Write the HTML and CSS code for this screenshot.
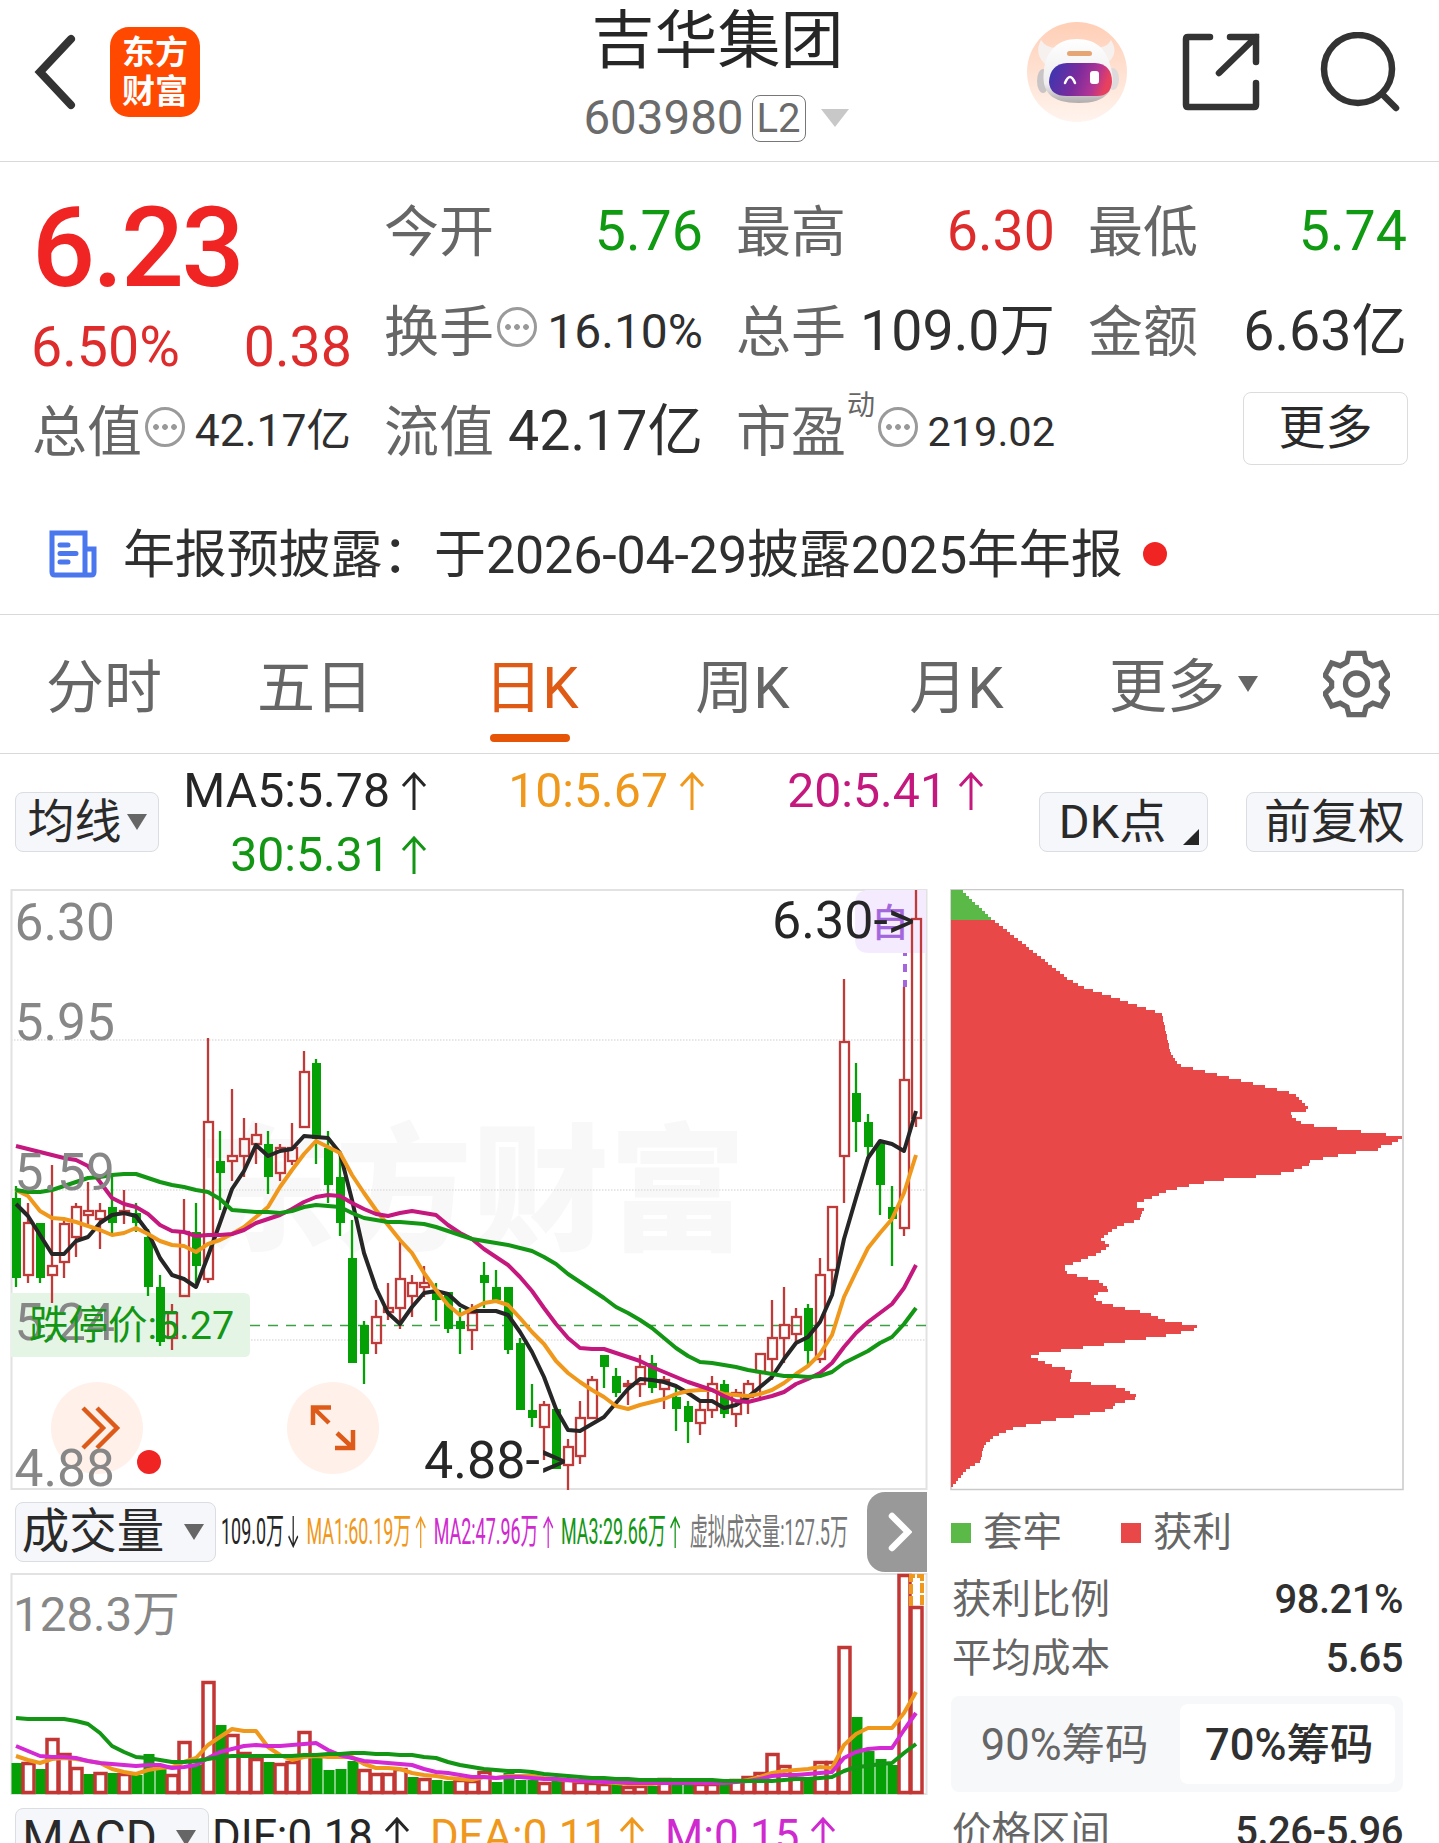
FILE: index.html
```html
<!DOCTYPE html>
<html lang="zh-CN">
<head>
    <meta charset="UTF-8">
    <meta name="viewport" content="width=device-width, initial-scale=1.0">
    <title>吉华集团 603980</title>
    <link rel="stylesheet" href="styles.css">
</head>
<body>
    <header class="top-bar">
        <div class="top-left">
            <svg class="back" width="44" height="78" viewBox="0 0 44 78"><path d="M39 6 L8 39 L39 72"/></svg>
            <div class="logo"><span>东方</span><span>财富</span></div>
        </div>
        <div class="stock-title">
            <h1>吉华集团</h1>
            <div class="stock-code">603980<span class="level">L2</span><svg width="30" height="20" viewBox="0 0 30 20"><path d="M1 1h28L15 19z" fill="#c8c8c8"/></svg></div>
        </div>
        <div class="top-right">
            <svg class="avatar" width="100" height="100" viewBox="0 0 100 100">
                <defs>
                    <linearGradient id="peach" x1="0" y1="0" x2="0" y2="1"><stop offset="0" stop-color="#ffceb5"/><stop offset="1" stop-color="#fff4ee"/></linearGradient>
                    <linearGradient id="visor" x1="0" y1="0" x2="1" y2="0.2"><stop offset="0" stop-color="#3437b4"/><stop offset="0.5" stop-color="#7a2b9c"/><stop offset="0.8" stop-color="#b03595"/><stop offset="1" stop-color="#e8405f"/></linearGradient>
                    <linearGradient id="shell" x1="0" y1="0" x2="0" y2="1"><stop offset="0" stop-color="#ffffff"/><stop offset="0.7" stop-color="#efedee"/><stop offset="1" stop-color="#b0abac"/></linearGradient>
                </defs>
                <circle cx="50" cy="50" r="50" fill="url(#peach)"/>
                <path d="M20 44 Q6 32 14 18 Q20 27 32 26 M79 42 Q93 32 84 18 Q80 26 68 26" fill="#f6f0ef"/>
                <ellipse cx="16" cy="59" rx="6" ry="12" fill="#c9c4c6"/>
                <ellipse cx="86" cy="57" rx="6" ry="11" fill="#ded9da"/>
                <path d="M50 17 C70 17 80 28 84 46 C90 68 80 81 52 81 C24 81 14 70 17 48 C19 30 30 17 50 17z" fill="url(#shell)"/>
                <rect x="40" y="29" width="25" height="5" rx="2.5" fill="#e5a673"/>
                <path d="M40 41H68Q85 42 85 60Q84 74 70 74H40Q23 74 22 60Q23 42 40 41z" fill="url(#visor)"/>
                <path d="M38 61 Q43 49 48 61" fill="none" stroke="#fff" stroke-width="2.500" stroke-linecap="round"/>
                <rect x="63" y="49" width="9" height="13" rx="3" fill="#fff"/>
            </svg>
            <svg class="share" width="78" height="78" viewBox="0 0 78 78"><path d="M28 4H6Q4 4 4 6V72Q4 74 6 74H72Q74 74 74 72V50M48 4H74V29M74 4L37 40"/></svg>
            <svg class="search" width="80" height="80" viewBox="0 0 80 80"><circle cx="38" cy="37" r="34"/><path d="M62 62 L76 76"/></svg>
        </div>
    </header>

    <section class="quote">
        <div class="price-box">
            <div class="price">6.23</div>
            <div class="change"><span>6.50%</span><span>0.38</span></div>
        </div>
        <div class="cell"><label>今开</label><b class="down">5.76</b></div>
        <div class="cell"><label>最高</label><b class="up">6.30</b></div>
        <div class="cell"><label>最低</label><b class="down">5.74</b></div>
        <div class="cell"><label>换手</label><i class="info"></i><b class="mid">16.10%</b></div>
        <div class="cell"><label>总手</label><b>109.0万</b></div>
        <div class="cell"><label>金额</label><b>6.63亿</b></div>
        <div class="cell"><label>总值</label><i class="info"></i><b class="small">42.17亿</b></div>
        <div class="cell"><label>流值</label><b>42.17亿</b></div>
        <div class="cell"><label>市盈</label><sup>动</sup><i class="info"></i><b class="smaller">219.02</b></div>
        <div class="cell cell-more"><button class="more">更多</button></div>
    </section>

    <section class="notice">
        <svg width="48" height="48" viewBox="0 0 48 48"><path d="M3 3H36V45H6Q3 45 3 42zM36 19H45V42Q45 45 42 45H36M11 15H19M11 23.500H27M11 32H19"/></svg>
        <span>年报预披露：于2026-04-29披露2025年年报</span>
        <em></em>
    </section>

    <nav class="tabs">
        <a>分时</a>
        <a>五日</a>
        <a class="active">日K</a>
        <a>周K</a>
        <a>月K</a>
        <a class="tab-more">更多<svg width="20" height="16" viewBox="0 0 20 16"><path d="M0 0h20L10 16z"/></svg></a>
        <svg class="gear" width="67" height="68" viewBox="0 0 70 70">
            <path d="M27 3H43L45 12L52 16L61 13L68 26L61 33V38L68 45L61 58L52 55L45 59L43 67H27L25 59L18 55L9 58L2 45L9 38V33L2 26L9 13L18 16L25 12z"/>
            <circle cx="35" cy="35" r="11.500"/>
        </svg>
    </nav>

    <main class="board">
        <div class="k-side">
            <div class="ma-row">
                <button class="pick">均线<svg width="20" height="16" viewBox="0 0 20 16"><path d="M0 0h20L10 16z"/></svg></button>
                <div class="ma-list">
                    <span class="c-black">MA5:5.78<svg class="arrow"><use href="#arr"/></svg></span>
                    <span class="c-orange">10:5.67<svg class="arrow"><use href="#arr"/></svg></span>
                    <span class="c-pink">20:5.41<svg class="arrow"><use href="#arr"/></svg></span>
                    <span class="c-green">30:5.31<svg class="arrow"><use href="#arr"/></svg></span>
                </div>
            </div>
            <svg class="k-chart" width="917" height="602" viewBox="11 889 917 602">
                <text class="watermark" x="198" y="1240">东方财富</text>
                <g class="grid">
                    <path d="M11 1040H926M11 1190H926M11 1340H926"/>
                    <rect x="11.500" y="890" width="915" height="599"/>
                </g>
                <circle cx="97" cy="1428" r="46" fill="#fff1e9"/>
                <circle cx="333" cy="1428" r="46" fill="#fff1e9"/>
                <path class="tool" d="M83 1408L103 1428L83 1448M97 1408L117 1428L97 1448"/>
                <path class="tool" d="M331 1407.500H313V1425M313 1407.500L329 1423M335 1448H353V1430M353 1448L337 1433"/>
                <path d="M11 1293H244Q250 1293 250 1299V1351Q250 1357 244 1357H11z" fill="#e4f4e5"/>
                <path d="M869 890H926V953H869Q855 953 855 939V904Q855 890 869 890z" fill="#f5ebff"/>
                <text class="self" x="871" y="936">自</text>
                <path d="M905 953V956M905 964V972M905 980V987" stroke="#a466dc" stroke-width="4"/>
                <path d="M250 1325.500H926" stroke="#3ea043" stroke-width="1.500" stroke-dasharray="10 8"/>
                <g id="candles"></g>
                <g id="price-ma"></g>
                <g class="axis">
                    <text x="14.500" y="940">6.30</text>
                    <text x="14.500" y="1040">5.95</text>
                    <text x="14.500" y="1190">5.59</text>
                    <text x="14.500" y="1340">5.24</text>
                    <text x="14.500" y="1486">4.88</text>
                </g>
                <text class="limit" x="29" y="1339">跌停价:5.27</text>
                <text class="mark" x="772" y="938">6.30-&gt;</text>
                <text class="mark" x="424" y="1478">4.88-&gt;</text>
                <circle cx="149" cy="1462" r="12" fill="#f12424"/>
            </svg>
            <div class="vol-row">
                <button class="pick">成交量<svg width="20" height="16" viewBox="0 0 20 16"><path d="M0 0h20L10 16z"/></svg></button>
                <div class="vol-list">
                    <span class="c-black">109.0万<svg class="arrow flip"><use href="#arr"/></svg></span>
                    <span class="c-orange">MA1:60.19万<svg class="arrow"><use href="#arr"/></svg></span>
                    <span class="c-violet">MA2:47.96万<svg class="arrow"><use href="#arr"/></svg></span>
                    <span class="c-green">MA3:29.66万<svg class="arrow"><use href="#arr"/></svg></span>
                    <span class="c-gray">虚拟成交量:127.5万</span>
                </div>
                <div class="next"><svg width="24" height="40" viewBox="0 0 24 40"><path d="M4 4L20 20L4 36"/></svg></div>
            </div>
            <svg class="v-chart" width="917" height="222" viewBox="11 1573 917 222">
                <g class="grid"><rect x="11.500" y="1574" width="915" height="220"/></g>
                <text class="axis vol-max" x="13" y="1631">128.3万</text>
                <g id="volumes"></g>
                <g id="volume-ma"></g>
            </svg>
            <div class="macd-row">
                <button class="pick">MACD<svg width="20" height="16" viewBox="0 0 20 16"><path d="M0 0h20L10 16z"/></svg></button>
                <span class="c-black">DIF:0.18<svg class="arrow"><use href="#arr"/></svg></span>
                <span class="c-orange">DEA:0.11<svg class="arrow"><use href="#arr"/></svg></span>
                <span class="c-violet">M:0.15<svg class="arrow"><use href="#arr"/></svg></span>
            </div>
        </div>

        <div class="chip-side">
            <div class="chip-tools">
                <button class="pick dk">DK点<svg width="16" height="16" viewBox="0 0 16 16"><path d="M16 0V16H0z"/></svg></button>
                <button class="pick">前复权</button>
            </div>
            <svg class="chip-chart" width="454" height="602" viewBox="950 889 454 602">
                <rect x="951" y="889.500" width="452" height="600" fill="none" stroke="#c9c9c9" stroke-width="1.500"/>
                <g id="chips"></g>
            </svg>
            <div class="legend"><span><i class="sq-green"></i>套牢</span><span><i class="sq-red"></i>获利</span></div>
            <div class="chip-line"><span>获利比例</span><b>98.21%</b></div>
            <div class="chip-line"><span>平均成本</span><b>5.65</b></div>
            <div class="segment"><span>90%筹码</span><span class="on">70%筹码</span></div>
            <div class="chip-line last"><span>价格区间</span><b>5.26-5.96</b></div>
        </div>
    </main>

    <svg class="defs" width="0" height="0"><symbol id="arr" viewBox="0 0 26 38"><path d="M13 38V2M2 14L13 2L24 14" fill="none" stroke="currentColor" stroke-width="3"/></symbol></svg>
    <script src="chart.js"></script>
</body>
</html>
```

FILE: styles.css
```css
* {
    box-sizing: border-box;
}
body {
    margin: 0;
    width: 1439px;
    height: 1843px;
    overflow: hidden;
    background: #fff;
    color: #2f2f2f;
    font-family: Roboto, "Noto Sans CJK SC", sans-serif;
    line-height: 1.2;
}
svg {
    display: block;
    flex: none;
}
b, i, em {
    font-style: normal;
    font-weight: 400;
}
button {
    font-family: inherit;
    color: #2a2a2a;
    padding: 0;
    line-height: 1.2;
}
.defs {
    position: absolute;
}

/* header */
.top-bar {
    display: grid;
    grid-template-columns: 478px 1fr 482px;
    height: 162px;
    border-bottom: 1.5px solid #d9d9d9;
}
.top-left {
    display: flex;
    align-items: center;
    height: 144px;
    padding-left: 32px;
}
.back path {
    fill: none;
    stroke: #333;
    stroke-width: 8;
    stroke-linecap: round;
}
.logo {
    display: flex;
    flex-direction: column;
    align-items: center;
    justify-content: center;
    width: 90px;
    height: 90px;
    margin-left: 34px;
    border-radius: 19px;
    background: #ff4800;
    color: #fff;
    font-size: 33px;
    font-weight: 700;
    line-height: 39px;
}
.stock-title {
    display: flex;
    flex-direction: column;
    align-items: center;
}
.stock-title h1 {
    margin: 4px 0 0 0;
    font-size: 63px;
    font-weight: 400;
    line-height: 74px;
    color: #262626;
}
.stock-code {
    display: flex;
    align-items: center;
    height: 56px;
    margin: 12px 2px 0 0;
    font-size: 47.5px;
    color: #6b6b6b;
}
.level {
    height: 47px;
    margin: 0 14px 0 8px;
    padding: 0 4px;
    border: 1.5px solid #777;
    border-radius: 8px;
    font-size: 40px;
    line-height: 45px;
}
.top-right {
    display: flex;
    align-items: center;
    height: 144px;
    padding-left: 70px;
}
.share {
    margin-left: 55px;
}
.search {
    margin-left: 60px;
}
.share path, .search circle, .search path {
    fill: none;
    stroke: #333;
    stroke-width: 6.5;
    stroke-linecap: round;
}

/* quote */
.quote {
    display: grid;
    grid-template-columns: repeat(4, 320px);
    grid-template-rows: repeat(3, 100px);
    column-gap: 32px;
    padding: 20px 32px 0;
}
.price-box {
    grid-row: span 2;
}
.price {
    height: 122px;
    font-size: 111px;
    font-weight: 500;
    letter-spacing: -2.5px;
    line-height: 133px;
    color: #f12424;
}
.change {
    display: flex;
    justify-content: space-between;
    margin-left: -1px;
    font-size: 55.5px;
    line-height: 88px;
    color: #de2c2c;
}
.cell {
    display: flex;
    align-items: center;
    font-size: 55px;
}
.cell label {
    color: #666;
}
.cell b {
    margin-left: auto;
    padding-right: 1px;
    font-size: 55.5px;
}
.cell b.mid {
    font-size: 48px;
}
.cell b.small {
    font-size: 44.5px;
}
.cell b.smaller {
    font-size: 41.5px;
}
.cell .down {
    color: #0f9a12;
}
.cell .up {
    color: #de2c2c;
}
.cell sup {
    align-self: flex-start;
    margin: 7px 0 0 1px;
    font-size: 28px;
    color: #666;
}
.info {
    position: relative;
    top: -5px;
    width: 40px;
    height: 40px;
    margin-left: 3px;
    border: 3px solid #9a9a9a;
    border-radius: 50%;
    background: radial-gradient(circle at 8px 17px, #999 2.5px, transparent 3.2px), radial-gradient(circle at 17px 17px, #999 2.5px, transparent 3.2px), radial-gradient(circle at 26px 17px, #999 2.5px, transparent 3.2px);
}
.cell-more {
    justify-content: flex-end;
    padding-bottom: 8px;
}
.more {
    width: 165px;
    height: 73px;
    border: 1.5px solid #dcdcdc;
    border-radius: 8px;
    background: #fff;
    font-size: 47px;
}

/* notice */
.notice {
    display: flex;
    align-items: center;
    height: 133px;
    padding: 12px 0 0 49px;
    border-bottom: 1.5px solid #d9d9d9;
    font-size: 52px;
    letter-spacing: -0.15px;
}
.notice path {
    fill: none;
    stroke: #4a76ee;
    stroke-width: 5;
    stroke-linecap: round;
}
.notice span {
    margin-left: 26px;
    padding-top: 4px;
}
.notice em {
    width: 24px;
    height: 24px;
    margin-left: 20px;
    border-radius: 50%;
    background: #f12424;
}

/* tabs */
.tabs {
    display: grid;
    grid-template-columns: 208px 214px 213px 215px 213px 213px 1fr;
    height: 139px;
    border-bottom: 1.5px solid #d9d9d9;
    color: #666;
    font-size: 58px;
}
.tabs a {
    position: relative;
    height: 138px;
    text-align: center;
    line-height: 146px;
}
.tabs .active {
    color: #df5a14;
    padding-left: 6px;
}
.tabs .active::after {
    content: "";
    position: absolute;
    left: 68px;
    bottom: 11px;
    width: 80px;
    height: 8px;
    border-radius: 4px;
    background: #e65507;
}
.tabs .tab-more {
    display: flex;
    align-items: center;
    height: 144px;
    padding-left: 46px;
}
.tab-more svg {
    margin-left: 13px;
    fill: #666;
    margin-bottom: 7px;
}
.gear {
    margin: 35px 0 0 47px;
    fill: none;
    stroke: #666;
    stroke-width: 5.5;
}

/* board */
.board {
    display: flex;
}
.k-side {
    width: 950px;
    padding-left: 11px;
    flex: none;
}
.pick {
    display: flex;
    align-items: center;
    justify-content: center;
    flex: none;
    height: 60px;
    border: 1.5px solid #dadde1;
    border-radius: 8px;
    background: #f6f7fa;
    font-size: 47px;
}
.pick svg {
    fill: #666;
}
.c-black { color: #262626; }
.c-orange { color: #f0981c; }
.c-pink { color: #c4187e; }
.c-green { color: #129614; }
.c-violet { color: #cf2ad0; }
.c-gray { color: #777; }
.arrow {
    width: 26px;
    height: 38px;
    margin-left: 11px;
}
.ma-row {
    display: flex;
    height: 135px;
}
.ma-row .pick {
    width: 144px;
    margin: 38px 0 0 4px;
}
.ma-row .pick svg {
    margin-left: 5px;
}
.ma-list {
    display: grid;
    grid-template-columns: 268px 278px 279px;
    grid-auto-rows: 64px;
    padding-top: 5px;
    font-size: 48.2px;
    flex: none;
}
.ma-list span {
    display: flex;
    align-items: center;
    justify-content: flex-end;
}
.k-chart, .v-chart {
    overflow: visible;
}
.watermark {
    font-size: 137px;
    font-weight: 900;
    fill: #f8f8f8;
}
.grid rect {
    fill: none;
    stroke: #e2e2e2;
    stroke-width: 2;
}
.grid path {
    fill: none;
    stroke: #dedede;
    stroke-width: 1.5;
    stroke-dasharray: 1.5 1.5;
}
.tool {
    fill: none;
    stroke: #de5a18;
    stroke-width: 4.5;
}
.axis {
    font-size: 51.5px;
    fill: #878787;
}
.vol-max {
    font-size: 47.5px;
}
.self {
    font-size: 38px;
    fill: #a466dc;
    stroke: #a466dc;
    stroke-width: 0.6;
}
.limit {
    font-size: 39.5px;
    fill: #129614;
}
.mark {
    font-size: 52px;
    fill: #262626;
}
.line {
    fill: none;
    stroke-width: 4;
    stroke-linejoin: round;
}
.vol-row {
    display: flex;
    align-items: center;
    height: 82px;
    padding-left: 4px;
}
.vol-row .pick {
    width: 201px;
    padding-right: 5px;
    font-size: 47.5px;
}
.vol-row .pick svg {
    margin-left: 20px;
}
.vol-list {
    display: flex;
    align-items: center;
    width: 650px;
    margin: 1px 0 0 5px;
    font-size: 36px;
    white-space: nowrap;
    transform: scaleX(0.498);
    transform-origin: left center;
}
.vol-list span {
    display: flex;
    align-items: center;
    flex: none;
    margin-right: 14px;
}
.vol-list .arrow {
    width: 24px;
    height: 32px;
    margin-left: 7px;
}
.vol-list .flip {
    transform: scaleY(-1);
}
.vol-list .c-gray {
    margin-left: 3px;
    font-size: 36.3px;
}
.next {
    display: flex;
    align-items: center;
    justify-content: center;
    flex: none;
    width: 60px;
    height: 80px;
    margin-left: -4px;
    padding-left: 6px;
    border-radius: 18px 0 0 18px;
    background: #999;
}
.next path {
    fill: none;
    stroke: #fff;
    stroke-width: 6.5;
    stroke-linecap: round;
}
.macd-row {
    display: flex;
    height: 60px;
    margin: 13px 0 0 4px;
    font-size: 43.8px;
}
.macd-row .pick {
    width: 194px;
    padding-right: 6px;
    font-size: 47.5px;
}
.macd-row .pick svg {
    margin-left: 19px;
}
.macd-row span {
    display: flex;
    align-items: center;
    margin: -4px 17px 0 3px;
}

/* chips */
.chip-side {
    width: 454px;
}
.chip-tools {
    display: flex;
    justify-content: space-between;
    width: 384px;
    height: 135px;
    margin-left: 89px;
    padding-top: 38px;
}
.chip-tools .pick {
    width: 177px;
}
.chip-tools .dk {
    width: 169px;
    padding-left: 11px;
}
.dk svg {
    align-self: flex-end;
    margin: 0 0 6px 17px;
    fill: #262626;
}
.legend {
    display: flex;
    height: 79px;
    padding-top: 5px;
    font-size: 39.5px;
    color: #666;
}
.legend span {
    display: flex;
    align-items: center;
    width: 170px;
}
.legend i {
    width: 20px;
    height: 20px;
    margin: 0 12px 0 1px;
}
.sq-green { background: #5bb947; }
.sq-red { background: #e84848; }
.chip-line {
    display: flex;
    align-items: center;
    justify-content: space-between;
    height: 59px;
    padding: 0 1px 0 2px;
    font-size: 39.5px;
    color: #666;
}
.chip-line b {
    font-size: 40px;
    font-weight: 500;
    letter-spacing: -0.5px;
    color: #303030;
}
.segment {
    display: flex;
    height: 96px;
    margin: 8px 1px 0 1px;
    padding: 8px;
    border-radius: 8px;
    background: #f7f8fa;
    font-size: 43.5px;
    color: #666;
}
.segment span {
    flex: 1;
    display: flex;
    align-items: center;
    justify-content: center;
    padding: 4px 9px 0 0;
}
.segment .on {
    padding: 4px 0 0 4px;
    border-radius: 8px;
    background: #fff;
    color: #303030;
    font-weight: 500;
}
.last {
    margin-top: 10px;
}
```

FILE: chart.js
```js
const RED = '#bf3a38';
const GREEN = '#05a005';
const STEP = 12;
const X0 = 16;

function el(parent, name, attrs) {
    const node = document.createElementNS('http://www.w3.org/2000/svg', name);
    for (const key in attrs) node.setAttribute(key, attrs[key]);
    document.getElementById(parent).appendChild(node);
}

// colour, high, body top, body bottom, low
const candles = `g 1186 1198 1278 1287,r 1203 1223 1275 1283,g 1223 1223 1278 1283,r 1165 1266 1275 1303,r 1220 1224 1262 1278,
r 1203 1207 1237 1257,r 1182 1211 1215 1224,r 1203 1211 1219 1249,g 1175 1207 1223 1233,r 1190 1211 1214 1224,
g 1203 1213 1223 1232,g 1229 1237 1287 1296,g 1275 1287 1342 1346,r 1304 1313 1338 1350,r 1199 1232 1296 1296,
g 1203 1232 1266 1283,r 1038 1122 1279 1283,g 1131 1161 1173 1210,r 1089 1156 1161 1181,r 1118 1139 1156 1177,
r 1123 1135 1144 1164,g 1131 1144 1177 1194,r 1144 1148 1173 1181,r 1123 1148 1161 1165,r 1051 1072 1127 1127,
g 1059 1063 1139 1164,g 1131 1148 1185 1203,g 1156 1177 1223 1236,g 1220 1258 1363 1363,g 1321 1325 1354 1384,
r 1300 1317 1343 1354,r 1283 1308 1312 1320,r 1240 1279 1308 1329,r 1275 1283 1296 1317,r 1266 1283 1287 1297,
g 1283 1292 1300 1321,g 1292 1292 1329 1333,g 1308 1321 1329 1354,r 1304 1313 1330 1350,g 1262 1275 1283 1308,
g 1270 1287 1300 1300,g 1287 1287 1350 1354,g 1338 1343 1410 1410,g 1384 1410 1418 1427,r 1401 1405 1427 1460,
g 1409 1409 1469 1469,r 1439 1447 1465 1490,r 1401 1418 1456 1464,r 1376 1380 1418 1418,g 1355 1355 1367 1388,
g 1368 1376 1393 1397,r 1380 1384 1386 1405,r 1355 1367 1384 1397,g 1355 1363 1388 1393,r 1376 1380 1389 1409,
g 1388 1397 1409 1431,g 1401 1406 1422 1443,r 1403 1410 1423 1435,r 1376 1384 1410 1418,g 1380 1384 1414 1418,
r 1389 1393 1414 1427,r 1380 1384 1397 1414,r 1354 1354 1372 1397,r 1300 1338 1359 1380,r 1287 1325 1338 1363,
r 1308 1317 1334 1342,g 1304 1308 1351 1367,r 1258 1275 1359 1363,r 1207 1207 1270 1290,r 979 1042 1156 1203,
g 1063 1093 1122 1152,g 1114 1122 1147 1156,g 1143 1143 1185 1215,g 1186 1207 1219 1266,r 987 1080 1228 1236,r 890 919 1118 1127`;

candles.split(',').forEach((row, i) => {
    const [color, ...v] = row.trim().split(' ');
    const [high, top, bottom, low] = v.map(Number);
    const x = X0 + i * STEP;
    if (color === 'g') {
        el('candles', 'path', { d: `M${x} ${high}V${low}`, stroke: GREEN, 'stroke-width': 2.3 });
        el('candles', 'rect', { x: x - 4, y: top, width: 9, height: bottom - top, fill: GREEN });
    } else {
        el('candles', 'path', { d: `M${x} ${high}V${top}M${x} ${bottom}V${low}`, stroke: RED, 'stroke-width': 2.3 });
        el('candles', 'rect', { x: x - 4, y: top, width: 9, height: bottom - top, fill: 'none', stroke: RED, 'stroke-width': 2.3 });
    }
});

function drawLine(parent, color, values) {
    const points = values.map((y, i) => `${X0 + i * STEP},${y}`).join(' ');
    el(parent, 'polyline', { class: 'line', stroke: color, points });
}

// MA5, MA10, MA20, MA30
drawLine('price-ma', '#262626', [1204,1216,1235,1254,1254,1241,1237,1223,1215,1213,1216,1232,1258,1275,1279,1287,1256,1223,1189,1171,1145,1156,1151,1149,1136,1137,1138,1153,1200,1253,1288,1313,1324,1307,1293,1291,1294,1305,1311,1311,1311,1315,1332,1352,1377,1409,1430,1431,1424,1417,1403,1389,1379,1380,1382,1386,1393,1401,1401,1408,1405,1397,1387,1377,1359,1343,1337,1322,1295,1239,1198,1158,1141,1144,1151,1111]);
drawLine('price-ma', '#f0981c', [1190,1196,1211,1218,1219,1222,1226,1230,1235,1233,1228,1234,1241,1245,1246,1252,1244,1240,1234,1227,1217,1207,1187,1170,1154,1141,1147,1153,1175,1193,1210,1225,1240,1253,1273,1290,1305,1315,1309,1303,1301,1305,1318,1332,1344,1361,1373,1382,1390,1397,1406,1409,1405,1402,1399,1394,1391,1390,1390,1394,1395,1396,1394,1390,1383,1374,1366,1354,1335,1297,1272,1248,1233,1219,1193,1155]);
drawLine('price-ma', '#c4187e', [1146,1149,1152,1155,1158,1160,1166,1182,1198,1204,1207,1214,1225,1231,1232,1236,1235,1235,1234,1230,1223,1219,1215,1209,1202,1197,1195,1196,1203,1209,1214,1216,1213,1211,1213,1215,1225,1233,1239,1249,1257,1265,1277,1291,1308,1324,1338,1348,1349,1349,1353,1357,1361,1367,1372,1377,1382,1386,1390,1396,1401,1402,1399,1396,1392,1384,1379,1373,1363,1347,1333,1322,1313,1304,1288,1265]);
drawLine('price-ma', '#129614', [1190,1192,1192,1190,1186,1182,1178,1177,1175,1174,1174,1178,1182,1185,1187,1190,1192,1199,1210,1211,1212,1212,1213,1211,1207,1205,1206,1207,1213,1218,1220,1222,1222,1223,1224,1227,1231,1235,1239,1241,1243,1245,1248,1251,1257,1264,1274,1282,1290,1298,1307,1313,1320,1328,1338,1348,1356,1362,1363,1365,1367,1370,1372,1374,1376,1376,1377,1376,1372,1363,1357,1351,1343,1337,1324,1308]);

// volume bars
const volColors = 'grgrrrgrgrgggrrgrgrrrgrrrggggrrrrgrggrrrggggrgrrrrgrrgrggrrgrrrrrrgrrrggggrr';
const volTops = [1763,1762,1769,1738,1753,1767,1774,1772,1773,1773,1775,1754,1769,1774,1741,1765,1681,1725,1734,1752,1758,1762,1763,1761,1731,1758,1770,1769,1761,1769,1773,1773,1768,1777,1778,1780,1781,1779,1780,1771,1782,1773,1780,1780,1782,1781,1779,1781,1782,1783,1784,1786,1785,1786,1778,1783,1783,1783,1783,1784,1779,1776,1772,1753,1765,1777,1779,1761,1761,1646,1717,1751,1759,1765,1574,1606];
volTops.forEach((y, i) => {
    const x = X0 + i * STEP;
    if (volColors[i] === 'g') {
        el('volumes', 'rect', { x: x - 4.5, y, width: 11, height: 1794 - y, fill: GREEN });
    } else {
        const h = Math.max(1794 - y - 3, 2);
        el('volumes', 'rect', { x: x - 5, y: y + 1.5, width: 11, height: h, fill: '#fff', stroke: '#c23634', 'stroke-width': 3.5 });
    }
});
// projected volume for today
el('volumes', 'path', { d: 'M911 1606V1576H922V1606', fill: 'none', stroke: '#f0981c', 'stroke-width': 4, 'stroke-dasharray': '10 2' });

drawLine('volume-ma', '#f0981c', [1756,1760,1763,1759,1758,1759,1761,1763,1769,1772,1774,1770,1768,1767,1762,1758,1745,1737,1729,1731,1731,1747,1755,1760,1757,1756,1757,1757,1757,1764,1768,1768,1769,1773,1775,1776,1778,1779,1780,1777,1778,1776,1776,1776,1778,1779,1780,1781,1781,1782,1783,1784,1784,1784,1783,1783,1783,1782,1782,1782,1782,1780,1777,1773,1771,1770,1769,1767,1768,1745,1734,1728,1728,1728,1713,1692]);
drawLine('volume-ma', '#d42ad4', [1746,1751,1756,1757,1757,1758,1761,1763,1764,1765,1766,1765,1765,1768,1767,1765,1758,1752,1749,1746,1745,1746,1746,1745,1744,1743,1750,1755,1758,1761,1762,1763,1764,1765,1769,1772,1773,1775,1777,1777,1778,1777,1777,1778,1779,1779,1780,1781,1781,1782,1782,1783,1783,1783,1783,1783,1783,1783,1783,1783,1782,1781,1779,1776,1775,1775,1774,1773,1772,1758,1752,1749,1748,1748,1730,1713]);
drawLine('volume-ma', '#129614', [1718,1719,1719,1719,1719,1721,1724,1733,1746,1752,1757,1758,1760,1762,1762,1761,1759,1757,1756,1756,1756,1756,1756,1756,1755,1755,1754,1754,1753,1753,1754,1754,1755,1755,1757,1758,1762,1765,1767,1769,1770,1771,1771,1772,1774,1775,1776,1777,1778,1778,1779,1779,1780,1780,1780,1780,1780,1780,1780,1781,1781,1781,1781,1781,1780,1779,1779,1778,1777,1771,1767,1766,1764,1763,1753,1744]);

// chip distribution outline, drawn as thin horizontal rows
const outline = [[961,890],[992,919],[1068,979],[1083,987],[1162,1014],[1169,1046],[1171,1053],[1179,1065],[1295,1094],[1308,1108],[1308,1110],[1288,1114],[1303,1124],[1317,1126],[1357,1131],[1383,1134],[1403,1137],[1394,1143],[1381,1146],[1378,1150],[1351,1153],[1310,1161],[1309,1165],[1293,1171],[1273,1175],[1227,1179],[1206,1182],[1182,1187],[1164,1192],[1153,1197],[1133,1205],[1144,1209],[1139,1220],[1119,1226],[1100,1239],[1110,1246],[1097,1254],[1064,1267],[1067,1273],[1098,1281],[1110,1290],[1093,1295],[1097,1301],[1118,1307],[1147,1313],[1166,1321],[1197,1326],[1194,1330],[1163,1336],[1079,1348],[1028,1355],[1053,1366],[1072,1370],[1070,1381],[1120,1387],[1137,1396],[1133,1401],[1117,1402],[1112,1409],[1077,1416],[1053,1420],[1014,1428],[995,1436],[984,1445],[980,1462],[967,1469],[951,1488]];
const rowH = 3;
for (let y = 890; y < 1488; y += rowH) {
    const mid = y + rowH / 2;
    const n = outline.findIndex(p => p[1] >= mid);
    if (n < 1) continue;
    const [x1, y1] = outline[n - 1];
    const [x2, y2] = outline[n];
    const x = Math.round(x1 + (x2 - x1) * (mid - y1) / (y2 - y1));
    el('chips', 'rect', { x: 951, y, width: x - 951, height: rowH, fill: y < 919 ? '#5bb947' : '#e84848', 'shape-rendering': 'crispEdges' });
}
```
